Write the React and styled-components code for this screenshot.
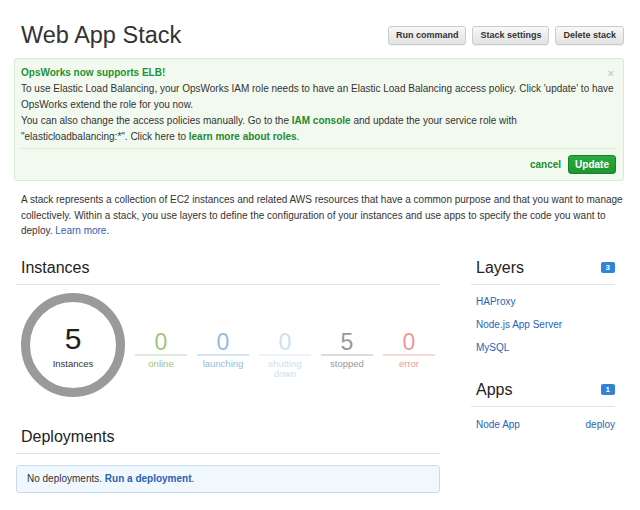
import React from 'react'
import styled, { createGlobalStyle } from 'styled-components'

const Global = createGlobalStyle`
  body {
    margin: 0;
    background: #fff;
    font-family: 'Helvetica Neue', 'Liberation Sans', Arial, sans-serif;
    color: #333;
  }
`

const Page = styled.div`
  width: 640px;
  padding: 22px 16px 0 14px;
  box-sizing: border-box;
`

const Header = styled.div`
  display: flex;
  align-items: center;
  justify-content: space-between;
  padding-left: 7px;
  height: 26px;
`

const Title = styled.h1`
  margin: 0;
  font-size: 23.5px;
  font-weight: 400;
  color: #333;
`

const Actions = styled.div`
  display: flex;
  gap: 6px;
`

const Button = styled.button`
  font-family: inherit;
  font-size: 9px;
  font-weight: 700;
  color: #333;
  height: 19px;
  padding: 0 7px;
  border: 1px solid #ccc;
  border-radius: 3px;
  background: linear-gradient(#f8f8f8, #e2e2e2);
  box-shadow: 0 1px 0 rgba(0, 0, 0, 0.05);
`

const Alert = styled.div`
  margin-top: 10px;
  background: #f2faf0;
  border: 1px solid #d4ecd0;
  border-radius: 3px;
  padding: 6px 7px 6px 6px;
  font-size: 10px;
  line-height: 16px;
  color: #333;
  position: relative;
`

const AlertTitle = styled.div`
  color: #1f9233;
  font-weight: 700;
`

const Close = styled.span`
  position: absolute;
  top: 6px;
  right: 9px;
  color: #b8d8b8;
  font-size: 11px;
  font-weight: 700;
`

const GreenLink = styled.a`
  color: #1f8a2f;
  font-weight: 700;
  text-decoration: none;
`

const AlertFooter = styled.div`
  margin-top: 3px;
  border-top: 1px solid #d4ecd0;
  padding-top: 6px;
  display: flex;
  justify-content: flex-end;
  align-items: center;
  gap: 7px;
`

const Cancel = styled.a`
  color: #1f8a2f;
  font-weight: 700;
  font-size: 10px;
`

const UpdateButton = styled.button`
  font-family: inherit;
  font-size: 10px;
  font-weight: 700;
  color: #fff;
  background: linear-gradient(#2aab3f, #1e9430);
  border: 1px solid #17822a;
  border-radius: 3px;
  height: 19px;
  padding: 0 6px;
`

const Intro = styled.p`
  margin: 11px 0 0 7px;
  font-size: 10px;
  line-height: 15.5px;
  color: #333;
`

const Link = styled.a`
  color: #2a62b4;
  text-decoration: none;
  font-weight: ${p => (p.$bold ? 700 : 400)};
`

const Columns = styled.div`
  display: flex;
  justify-content: space-between;
  margin-top: 19px;
`

const Main = styled.div`
  width: 424px;
  margin-left: 2px;
`

const Side = styled.div`
  width: 144px;
  margin-right: 9px;
`

const SectionHead = styled.div`
  display: flex;
  align-items: center;
  justify-content: space-between;
  padding: 0 0 6px 5px;
  border-bottom: 1px solid #e3e3e3;
  height: 20px;
`

const SectionTitle = styled.h2`
  margin: 0;
  font-size: 16px;
  font-weight: 400;
  color: #222;
`

const Badge = styled.span`
  background: #2f84d6;
  color: #fff;
  font-size: 8px;
  font-weight: 700;
  border-radius: 2px;
  padding: 1px 5px;
  line-height: 9px;
`

const InstanceRow = styled.div`
  display: flex;
  align-items: flex-start;
  margin-top: 8px;
`

const Ring = styled.div`
  width: 104px;
  height: 104px;
  box-sizing: border-box;
  border: 9px solid #9a9a9a;
  border-radius: 50%;
  margin-left: 5px;
  display: flex;
  flex-direction: column;
  align-items: center;
  justify-content: center;
`

const RingNumber = styled.div`
  font-size: 30px;
  line-height: 30px;
  color: #222;
  margin-top: 4px;
`

const RingLabel = styled.div`
  font-size: 9.5px;
  color: #333;
  margin-top: 4px;
`

const Stats = styled.div`
  display: flex;
  gap: 10px;
  margin-left: 10px;
  margin-top: 38px;
`

const Stat = styled.div`
  width: 52px;
  text-align: center;
  color: ${p => p.$color};
`

const StatNumber = styled.div`
  font-size: 23px;
  line-height: 22px;
  padding-bottom: 1px;
  border-bottom: 2px solid ${p => p.$line};
`

const StatLabel = styled.div`
  font-size: 9.5px;
  line-height: 10px;
  margin-top: 3px;
`

const DeployHead = styled(SectionHead)`
  margin-top: 30px;
`

const Empty = styled.div`
  margin-top: 11px;
  background: #f0f7fd;
  border: 1px solid #c8dcef;
  border-radius: 3px;
  padding: 0 10px;
  height: 26px;
  display: flex;
  align-items: center;
  font-size: 10px;
`

const List = styled.div`
  display: flex;
  flex-direction: column;
  gap: 10px;
  padding: 10px 0 0 5px;
  font-size: 10px;
  line-height: 13px;
`

const ListRow = styled.div`
  display: flex;
  justify-content: space-between;
`

const AppsHead = styled(SectionHead)`
  margin-top: 26px;
`

const AppList = styled(List)`
  padding-top: 11px;
`

const stats = [
  { n: 0, label: 'online', color: '#a4c283', line: '#e4ead8' },
  { n: 0, label: 'launching', color: '#94bbe3', line: '#d6e5f4' },
  { n: 0, label: 'shutting down', color: '#cde0f0', line: '#ebf2f9' },
  { n: 5, label: 'stopped', color: '#999', line: '#dcdcdc' },
  { n: 0, label: 'error', color: '#ef9a92', line: '#f7d9d6' }
]

const App = () => (
  <Page>
    <Global />
    <Header>
      <Title>Web App Stack</Title>
      <Actions>
        <Button>Run command</Button>
        <Button>Stack settings</Button>
        <Button>Delete stack</Button>
      </Actions>
    </Header>

    <Alert>
      <Close>×</Close>
      <AlertTitle>OpsWorks now supports ELB!</AlertTitle>
      <div>
        To use Elastic Load Balancing, your OpsWorks IAM role needs to have an Elastic Load
        Balancing access policy. Click 'update' to have OpsWorks extend the role for you now.
      </div>
      <div>
        You can also change the access policies manually. Go to the{' '}
        <GreenLink>IAM console</GreenLink> and update the your service role with
        "elasticloadbalancing:*". Click here to <GreenLink>learn more about roles</GreenLink>.
      </div>
      <AlertFooter>
        <Cancel>cancel</Cancel>
        <UpdateButton>Update</UpdateButton>
      </AlertFooter>
    </Alert>

    <Intro>
      A stack represents a collection of EC2 instances and related AWS resources that have a
      common purpose and that you want to manage collectively. Within a stack, you use layers to
      define the configuration of your instances and use apps to specify the code you want to
      deploy. <Link>Learn more</Link>.
    </Intro>

    <Columns>
      <Main>
        <SectionHead>
          <SectionTitle>Instances</SectionTitle>
        </SectionHead>
        <InstanceRow>
          <Ring>
            <RingNumber>5</RingNumber>
            <RingLabel>Instances</RingLabel>
          </Ring>
          <Stats>
            {stats.map(s => (
              <Stat key={s.label} $color={s.color}>
                <StatNumber $line={s.line}>{s.n}</StatNumber>
                <StatLabel>{s.label}</StatLabel>
              </Stat>
            ))}
          </Stats>
        </InstanceRow>

        <DeployHead>
          <SectionTitle>Deployments</SectionTitle>
        </DeployHead>
        <Empty>
          No deployments.&nbsp;<Link $bold>Run a deployment</Link>.
        </Empty>
      </Main>

      <Side>
        <SectionHead>
          <SectionTitle>Layers</SectionTitle>
          <Badge>3</Badge>
        </SectionHead>
        <List>
          <Link>HAProxy</Link>
          <Link>Node.js App Server</Link>
          <Link>MySQL</Link>
        </List>
        <AppsHead>
          <SectionTitle>Apps</SectionTitle>
          <Badge>1</Badge>
        </AppsHead>
        <AppList>
          <ListRow>
            <Link>Node App</Link>
            <Link>deploy</Link>
          </ListRow>
        </AppList>
      </Side>
    </Columns>
  </Page>
)

export default App
